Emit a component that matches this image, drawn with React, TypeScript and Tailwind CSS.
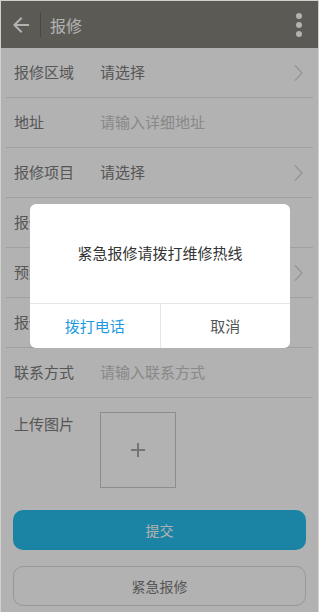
import { MdArrowBack } from 'react-icons/md'

const font = { fontFamily: '"Noto Sans CJK SC", "Noto Sans", sans-serif' }

type Row = { label: string; value: string; kind: 'select' | 'input' }

const rows: Row[] = [
  { label: '报修区域', value: '请选择', kind: 'select' },
  { label: '地址', value: '请输入详细地址', kind: 'input' },
  { label: '报修项目', value: '请选择', kind: 'select' },
  { label: '报修描述', value: '请输入报修描述', kind: 'input' },
  { label: '预约时间', value: '请选择', kind: 'select' },
  { label: '报修人', value: '请输入报修人', kind: 'input' },
  { label: '联系方式', value: '请输入联系方式', kind: 'input' },
]

function Chevron() {
  return (
    <svg className="ml-auto" width="9" height="18" viewBox="0 0 9 18" fill="none">
      <polyline points="1,1.5 8,9 1,16.5" stroke="#d4d4d4" strokeWidth="1.3" />
    </svg>
  )
}

export default function App() {
  return (
    <div className="relative min-h-[612px] w-[319px] overflow-hidden border-x border-t border-[#d2d0cd] bg-white" style={font}>
      {/* Header */}
      <header className="flex h-[47px] items-center bg-[#83817a] text-white">
        <div className="flex h-full w-[39px] items-center justify-center">
          <MdArrowBack size={24} />
        </div>
        <div className="h-[25px] w-px bg-black/20" />
        <h1 className="ml-[9px] text-[16px]">报修</h1>
        <div className="ml-auto mr-[16px] flex flex-col items-center gap-[3px]">
          <span className="h-[6px] w-[6px] rounded-full bg-white" />
          <span className="h-[6px] w-[6px] rounded-full bg-white" />
          <span className="h-[6px] w-[6px] rounded-full bg-white" />
        </div>
      </header>

      {/* Form */}
      <div className="mx-[5px]">
        {rows.map((r) => (
          <div key={r.label} className="flex h-[50px] items-center border-b border-[#e5e5e5] pl-[8px] pr-[10px] text-[15px]">
            <span className="w-[86px] text-[#7b7b7b]">{r.label}</span>
            <span className={r.kind === 'select' ? 'text-[#7b7b7b]' : 'text-[#c4c4c4]'}>{r.value}</span>
            {r.kind === 'select' && <Chevron />}
          </div>
        ))}
        <div className="flex pl-[8px] pt-[14px]">
          <span className="w-[86px] text-[15px] leading-[24px] text-[#7b7b7b]">上传图片</span>
          <div className="flex h-[76px] w-[76px] items-center justify-center border border-[#cbcbcb]">
            <span className="relative block h-[14px] w-[14px]">
              <span className="absolute left-0 top-[6px] h-[2px] w-[14px] bg-[#a8a8a8]" />
              <span className="absolute left-[6px] top-0 h-[14px] w-[2px] bg-[#a8a8a8]" />
            </span>
          </div>
        </div>
      </div>

      <div className="mx-[12px] mt-[22px] flex flex-col gap-[16px]">
        <button type="button" className="h-[40px] rounded-[10px] bg-[#28bcea] text-[14px] text-white">提交</button>
        <button type="button" className="h-[40px] rounded-[10px] border border-[#d9d9d9] bg-white text-[14px] text-[#7b7b7b]">紧急报修</button>
      </div>

      {/* Dialog */}
      <div className="absolute inset-0 bg-black/30">
        <div className="absolute left-[29px] top-[203px] w-[260px] overflow-hidden rounded-[6px] bg-white">
          <div className="flex h-[99px] items-center justify-center text-[15px] text-[#333]">紧急报修请拨打维修热线</div>
          <div className="flex h-[45px] border-t border-[#e6e6e6] text-[15px]">
            <button type="button" className="flex-1 border-r border-[#e6e6e6] text-[#1e9be0]">拨打电话</button>
            <button type="button" className="flex-1 text-[#555]">取消</button>
          </div>
        </div>
      </div>
    </div>
  )
}
